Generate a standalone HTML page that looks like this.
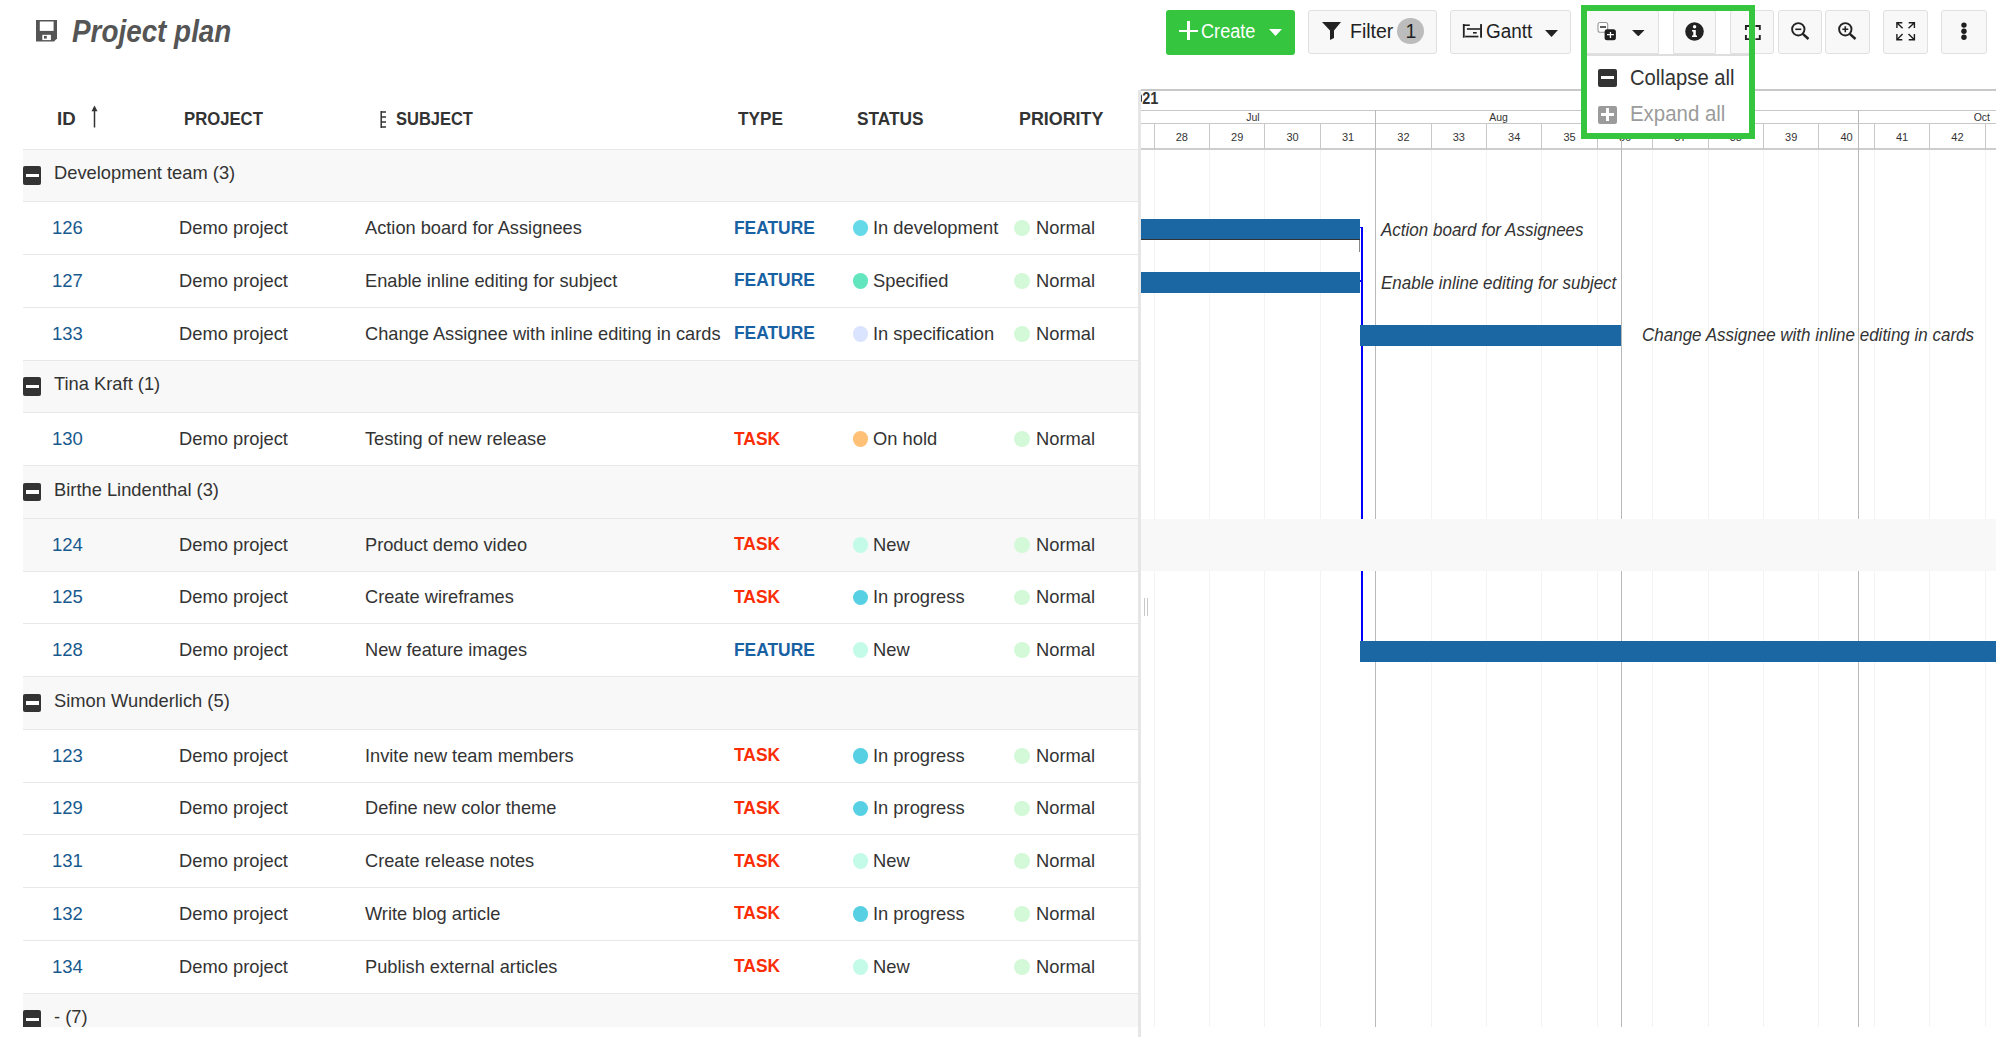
<!DOCTYPE html>
<html><head><meta charset="utf-8"><title>Project plan</title>
<style>
html,body{margin:0;padding:0;background:#fff;}
body{width:2000px;height:1057px;overflow:hidden;position:relative;font-family:"Liberation Sans", sans-serif;}
.t{position:absolute;white-space:nowrap;}
.b{position:absolute;}
</style></head><body>
<svg class="b" style="left:36px;top:20px" width="21" height="21.5" viewBox="0 0 21 21.5"><path d="M0 0H21V18.5L18 21.5H0Z" fill="#555"/><rect x="3.8" y="1.5" width="13.8" height="9.4" fill="#fff"/><rect x="6.3" y="14.8" width="8.6" height="5.3" fill="#fff"/><rect x="8" y="15.9" width="2.8" height="2.7" fill="#555"/></svg>
<div class="t" style="left:72px;top:12.12px;font-size:32.2px;line-height:38.64px;color:#555;font-weight:700;font-style:italic;transform:scaleX(0.865);transform-origin:0 0;">Project plan</div>
<div class="b" style="left:1166px;top:10px;width:129px;height:44.5px;background:#35c53f;border-radius:3px;"></div>
<div class="b" style="left:1179px;top:29.5px;width:19px;height:2.4px;background:#fff"></div>
<div class="b" style="left:1187.3px;top:21px;width:2.4px;height:19px;background:#fff"></div>
<div class="t" style="left:1201px;top:20.24px;font-size:19.5px;line-height:23.4px;color:#fff;font-weight:400;font-style:normal;transform:scaleX(0.93);transform-origin:0 0;">Create</div>
<svg class="b" style="left:1269px;top:29px" width="13" height="7" viewBox="0 0 13 7"><path d="M0 0H13L6.5 7Z" fill="#fff"/></svg>
<div class="b" style="left:1308px;top:9.9px;width:129px;height:44.6px;background:#f8f8f8;border:1.3px solid #e0e0e0;border-bottom-width:1.6px;border-radius:3px;box-sizing:border-box;"></div>
<svg class="b" style="left:1321.5px;top:21.5px" width="19" height="18" viewBox="0 0 19 18"><path d="M0 0H19L12 8.5V16L8 18V8.5Z" fill="#222"/></svg>
<div class="t" style="left:1350px;top:19.84px;font-size:19.5px;line-height:23.4px;color:#222;font-weight:400;font-style:normal;">Filter</div>
<div class="b" style="left:1397px;top:17.5px;width:26.5px;height:26.5px;border-radius:50%;background:#bcbcbc"></div>
<div class="t" style="left:1405.5px;top:19.84px;font-size:19.5px;line-height:23.4px;color:#222;font-weight:400;font-style:normal;">1</div>
<div class="b" style="left:1450px;top:9.9px;width:121px;height:44.6px;background:#f8f8f8;border:1.3px solid #e0e0e0;border-bottom-width:1.6px;border-radius:3px;box-sizing:border-box;"></div>
<svg class="b" style="left:1458px;top:18px" width="32" height="26" viewBox="0 0 32 26" fill="#222"><rect x="4.9" y="6.1" width="1.8" height="13.6"/><rect x="4.9" y="6.4" width="6.9" height="1.6"/><rect x="8.9" y="10.2" width="13.2" height="1.6"/><rect x="15" y="14" width="3.7" height="1.6"/><rect x="7.1" y="17.7" width="13.3" height="1.7"/><rect x="22.1" y="6.1" width="1.9" height="13.6"/></svg>
<div class="t" style="left:1486px;top:19.84px;font-size:19.5px;line-height:23.4px;color:#222;font-weight:400;font-style:normal;transform:scaleX(0.97);transform-origin:0 0;">Gantt</div>
<svg class="b" style="left:1545px;top:29.5px" width="13" height="7" viewBox="0 0 13 7"><path d="M0 0H13L6.5 7Z" fill="#222"/></svg>
<div class="b" style="left:1587px;top:54.3px;width:162px;height:1.5px;background:#dedede;"></div>
<div class="b" style="left:1583px;top:9.9px;width:75.5px;height:44.6px;background:#f8f8f8;border:1.3px solid #e0e0e0;border-bottom-width:1.6px;border-radius:3px 3px 1px 1px;box-sizing:border-box;"></div>
<svg class="b" style="left:1592px;top:16px" width="30" height="30" viewBox="0 0 30 30"><rect x="6" y="6.5" width="9.7" height="9.7" rx="2" fill="#fff" stroke="#999" stroke-width="1.1"/><path d="M8 11H14" stroke="#333" stroke-width="1.6"/><rect x="12.6" y="13.2" width="11.3" height="11.1" rx="2.5" fill="#1e1e1e"/><path d="M15 18.6H21.9M18.45 15.9V21.9" stroke="#fff" stroke-width="1.3"/></svg>
<svg class="b" style="left:1632.2px;top:29.6px" width="12.6" height="6.4" viewBox="0 0 12.6 6.4"><path d="M0 0H12.6L6.3 6.4Z" fill="#222"/></svg>
<div class="b" style="left:1672.5px;top:9.9px;width:43.8px;height:44.6px;background:#f8f8f8;border:1.3px solid #e0e0e0;border-bottom-width:1.6px;border-radius:3px 3px 1px 1px;box-sizing:border-box;"></div>
<svg class="b" style="left:1685px;top:21.5px" width="19" height="19" viewBox="0 0 19 19"><circle cx="9.5" cy="9.5" r="9.3" fill="#222"/><circle cx="9.6" cy="4.8" r="1.7" fill="#fff"/><path d="M7 8H10.8V13.6H12V15H7V13.6H8.3V9.4H7Z" fill="#fff"/></svg>
<div class="b" style="left:1730.2px;top:9.9px;width:44.3px;height:44.6px;background:#f8f8f8;border:1.3px solid #e0e0e0;border-bottom-width:1.6px;border-radius:3px 3px 3px 1px;box-sizing:border-box;"></div>
<svg class="b" style="left:1743.5px;top:23.5px" width="18" height="17" viewBox="0 0 18 17" fill="none" stroke="#222" stroke-width="1.9"><path d="M1.9 6V2H6.4M11.4 2H15.8V6M15.8 11V15.1H11.4M6.4 15.1H1.9V11"/></svg>
<div class="b" style="left:1777.5px;top:9.9px;width:44.5px;height:44.6px;background:#f8f8f8;border:1.3px solid #e0e0e0;border-bottom-width:1.6px;border-radius:3px;box-sizing:border-box;"></div>
<svg class="b" style="left:1790.5px;top:22px" width="19" height="18" viewBox="0 0 19 18" fill="none" stroke="#222"><circle cx="7.3" cy="7.3" r="6.2" stroke-width="1.9"/><path d="M4.3 7.3H10.3" stroke-width="1.6"/><path d="M11.8 11.8L17.5 17" stroke-width="2.5"/></svg>
<div class="b" style="left:1825px;top:9.9px;width:44.5px;height:44.6px;background:#f8f8f8;border:1.3px solid #e0e0e0;border-bottom-width:1.6px;border-radius:3px;box-sizing:border-box;"></div>
<svg class="b" style="left:1838.2px;top:22px" width="19" height="18" viewBox="0 0 19 18" fill="none" stroke="#222"><circle cx="7.3" cy="7.3" r="6.2" stroke-width="1.9"/><path d="M4.3 7.3H10.3M7.3 4.3V10.3" stroke-width="1.6"/><path d="M11.8 11.8L17.5 17" stroke-width="2.5"/></svg>
<div class="b" style="left:1883px;top:9.9px;width:44.5px;height:44.6px;background:#f8f8f8;border:1.3px solid #e0e0e0;border-bottom-width:1.6px;border-radius:3px;box-sizing:border-box;"></div>
<svg class="b" style="left:1890px;top:16px" width="32" height="30" viewBox="0 0 32 30" fill="none" stroke="#1e1e1e" stroke-width="1.4"><path d="M6.9 12V6.7H12.3M6.9 6.7L12.6 12.2"/><path d="M24.4 12V6.7H18.7M24.4 6.7L18.5 12.2"/><path d="M6.9 18.1V23.7H12.3M6.9 23.7L12.6 18.1"/><path d="M24.4 18.1V23.7H18.7M24.4 23.7L18.5 18.1"/></svg>
<div class="b" style="left:1941px;top:9.9px;width:46px;height:44.6px;background:#f8f8f8;border:1.3px solid #e0e0e0;border-bottom-width:1.6px;border-radius:3px;box-sizing:border-box;"></div>
<svg class="b" style="left:1961px;top:22px" width="6" height="18" viewBox="0 0 6 18" fill="#1e1e1e"><circle cx="2.95" cy="3.1" r="2.7"/><circle cx="2.95" cy="9.25" r="2.7"/><circle cx="2.95" cy="15.25" r="2.7"/></svg>
<div class="t" style="left:57.2px;top:107.71px;font-size:19px;line-height:22.8px;color:#333;font-weight:700;font-style:normal;transform:scaleX(0.98);transform-origin:0 0;">ID</div>
<svg class="b" style="left:90px;top:105px" width="9" height="23" viewBox="0 0 9 23"><path d="M4.5 3V22.5" stroke="#333" stroke-width="1.5"/><path d="M1.5 6.3L4.5 0.6L7.5 6.3Z" fill="#333"/></svg>
<div class="t" style="left:184px;top:107.71px;font-size:19px;line-height:22.8px;color:#333;font-weight:700;font-style:normal;transform:scaleX(0.879);transform-origin:0 0;">PROJECT</div>
<svg class="b" style="left:379.5px;top:111px" width="7" height="17" viewBox="0 0 7 17" fill="none" stroke="#333" stroke-width="1.5"><path d="M1.2 0V17M1.2 1H6M1.2 6H6M1.2 11H6M1.2 16H6"/></svg>
<div class="t" style="left:395.5px;top:107.71px;font-size:19px;line-height:22.8px;color:#333;font-weight:700;font-style:normal;transform:scaleX(0.867);transform-origin:0 0;">SUBJECT</div>
<div class="t" style="left:738.2px;top:107.71px;font-size:19px;line-height:22.8px;color:#333;font-weight:700;font-style:normal;transform:scaleX(0.905);transform-origin:0 0;">TYPE</div>
<div class="t" style="left:856.5px;top:107.71px;font-size:19px;line-height:22.8px;color:#333;font-weight:700;font-style:normal;transform:scaleX(0.91);transform-origin:0 0;">STATUS</div>
<div class="t" style="left:1018.5px;top:107.71px;font-size:19px;line-height:22.8px;color:#333;font-weight:700;font-style:normal;transform:scaleX(0.94);transform-origin:0 0;">PRIORITY</div>
<div class="b" style="left:0;top:0;width:1138px;height:1027px;overflow:hidden">
<div class="b" style="left:23px;top:150px;width:1115px;height:51px;background:#f8f8f8;"></div>
<div class="b" style="left:23px;top:149px;width:1115px;height:1px;background:#e8e8e8;"></div>
<div class="b" style="left:23px;top:166.10px;width:18.3px;height:18.5px;background:#333;border-radius:2px"></div>
<div class="b" style="left:26px;top:173.9px;width:12.8px;height:3.2px;background:#fff;"></div>
<div class="t" style="left:54px;top:162.39px;font-size:18.5px;line-height:22.2px;color:#333;font-weight:400;font-style:normal;transform:scaleX(0.99);transform-origin:0 0;">Development team (3)</div>
<div class="b" style="left:23px;top:201px;width:1115px;height:1px;background:#e8e8e8;"></div>
<div class="t" style="left:52px;top:217.09px;font-size:18.5px;line-height:22.2px;color:#175a8e;font-weight:400;font-style:normal;">126</div>
<div class="t" style="left:179.3px;top:217.09px;font-size:18.5px;line-height:22.2px;color:#333;font-weight:400;font-style:normal;transform:scaleX(0.99);transform-origin:0 0;">Demo project</div>
<div class="t" style="left:364.7px;top:217.09px;font-size:18.5px;line-height:22.2px;color:#333;font-weight:400;font-style:normal;transform:scaleX(0.985);transform-origin:0 0;">Action board for Assignees</div>
<div class="t" style="left:733.8px;top:216.61px;font-size:19px;line-height:22.8px;color:#1862a3;font-weight:700;font-style:normal;transform:scaleX(0.915);transform-origin:0 0;">FEATURE</div>
<div class="b" style="left:852.7px;top:220.30px;width:15.8px;height:15.8px;border-radius:50%;background:#66d9e8"></div>
<div class="t" style="left:873px;top:217.09px;font-size:18.5px;line-height:22.2px;color:#333;font-weight:400;font-style:normal;transform:scaleX(0.99);transform-origin:0 0;">In development</div>
<div class="b" style="left:1014.3px;top:220.30px;width:15.8px;height:15.8px;border-radius:50%;background:#d3f9d8"></div>
<div class="t" style="left:1035.5px;top:217.09px;font-size:18.5px;line-height:22.2px;color:#333;font-weight:400;font-style:normal;transform:scaleX(0.99);transform-origin:0 0;">Normal</div>
<div class="b" style="left:23px;top:254px;width:1115px;height:1px;background:#e8e8e8;"></div>
<div class="t" style="left:52px;top:269.84px;font-size:18.5px;line-height:22.2px;color:#175a8e;font-weight:400;font-style:normal;">127</div>
<div class="t" style="left:179.3px;top:269.84px;font-size:18.5px;line-height:22.2px;color:#333;font-weight:400;font-style:normal;transform:scaleX(0.99);transform-origin:0 0;">Demo project</div>
<div class="t" style="left:364.7px;top:269.84px;font-size:18.5px;line-height:22.2px;color:#333;font-weight:400;font-style:normal;transform:scaleX(0.985);transform-origin:0 0;">Enable inline editing for subject</div>
<div class="t" style="left:733.8px;top:269.36px;font-size:19px;line-height:22.8px;color:#1862a3;font-weight:700;font-style:normal;transform:scaleX(0.915);transform-origin:0 0;">FEATURE</div>
<div class="b" style="left:852.7px;top:273.05px;width:15.8px;height:15.8px;border-radius:50%;background:#63e6be"></div>
<div class="t" style="left:873px;top:269.84px;font-size:18.5px;line-height:22.2px;color:#333;font-weight:400;font-style:normal;transform:scaleX(0.99);transform-origin:0 0;">Specified</div>
<div class="b" style="left:1014.3px;top:273.05px;width:15.8px;height:15.8px;border-radius:50%;background:#d3f9d8"></div>
<div class="t" style="left:1035.5px;top:269.84px;font-size:18.5px;line-height:22.2px;color:#333;font-weight:400;font-style:normal;transform:scaleX(0.99);transform-origin:0 0;">Normal</div>
<div class="b" style="left:23px;top:307px;width:1115px;height:1px;background:#e8e8e8;"></div>
<div class="t" style="left:52px;top:322.59px;font-size:18.5px;line-height:22.2px;color:#175a8e;font-weight:400;font-style:normal;">133</div>
<div class="t" style="left:179.3px;top:322.59px;font-size:18.5px;line-height:22.2px;color:#333;font-weight:400;font-style:normal;transform:scaleX(0.99);transform-origin:0 0;">Demo project</div>
<div class="t" style="left:364.7px;top:322.59px;font-size:18.5px;line-height:22.2px;color:#333;font-weight:400;font-style:normal;transform:scaleX(0.985);transform-origin:0 0;">Change Assignee with inline editing in cards</div>
<div class="t" style="left:733.8px;top:322.11px;font-size:19px;line-height:22.8px;color:#1862a3;font-weight:700;font-style:normal;transform:scaleX(0.915);transform-origin:0 0;">FEATURE</div>
<div class="b" style="left:852.7px;top:325.80px;width:15.8px;height:15.8px;border-radius:50%;background:#dbe4ff"></div>
<div class="t" style="left:873px;top:322.59px;font-size:18.5px;line-height:22.2px;color:#333;font-weight:400;font-style:normal;transform:scaleX(0.99);transform-origin:0 0;">In specification</div>
<div class="b" style="left:1014.3px;top:325.80px;width:15.8px;height:15.8px;border-radius:50%;background:#d3f9d8"></div>
<div class="t" style="left:1035.5px;top:322.59px;font-size:18.5px;line-height:22.2px;color:#333;font-weight:400;font-style:normal;transform:scaleX(0.99);transform-origin:0 0;">Normal</div>
<div class="b" style="left:23px;top:361px;width:1115px;height:51px;background:#f8f8f8;"></div>
<div class="b" style="left:23px;top:360px;width:1115px;height:1px;background:#e8e8e8;"></div>
<div class="b" style="left:23px;top:377.10px;width:18.3px;height:18.5px;background:#333;border-radius:2px"></div>
<div class="b" style="left:26px;top:384.9px;width:12.8px;height:3.2px;background:#fff;"></div>
<div class="t" style="left:54px;top:373.39px;font-size:18.5px;line-height:22.2px;color:#333;font-weight:400;font-style:normal;transform:scaleX(0.99);transform-origin:0 0;">Tina Kraft (1)</div>
<div class="b" style="left:23px;top:412px;width:1115px;height:1px;background:#e8e8e8;"></div>
<div class="t" style="left:52px;top:428.09px;font-size:18.5px;line-height:22.2px;color:#175a8e;font-weight:400;font-style:normal;">130</div>
<div class="t" style="left:179.3px;top:428.09px;font-size:18.5px;line-height:22.2px;color:#333;font-weight:400;font-style:normal;transform:scaleX(0.99);transform-origin:0 0;">Demo project</div>
<div class="t" style="left:364.7px;top:428.09px;font-size:18.5px;line-height:22.2px;color:#333;font-weight:400;font-style:normal;transform:scaleX(0.985);transform-origin:0 0;">Testing of new release</div>
<div class="t" style="left:733.8px;top:427.61px;font-size:19px;line-height:22.8px;color:#fa2d05;font-weight:700;font-style:normal;transform:scaleX(0.915);transform-origin:0 0;">TASK</div>
<div class="b" style="left:852.7px;top:431.30px;width:15.8px;height:15.8px;border-radius:50%;background:#ffc078"></div>
<div class="t" style="left:873px;top:428.09px;font-size:18.5px;line-height:22.2px;color:#333;font-weight:400;font-style:normal;transform:scaleX(0.99);transform-origin:0 0;">On hold</div>
<div class="b" style="left:1014.3px;top:431.30px;width:15.8px;height:15.8px;border-radius:50%;background:#d3f9d8"></div>
<div class="t" style="left:1035.5px;top:428.09px;font-size:18.5px;line-height:22.2px;color:#333;font-weight:400;font-style:normal;transform:scaleX(0.99);transform-origin:0 0;">Normal</div>
<div class="b" style="left:23px;top:466px;width:1115px;height:52px;background:#f8f8f8;"></div>
<div class="b" style="left:23px;top:465px;width:1115px;height:1px;background:#e8e8e8;"></div>
<div class="b" style="left:23px;top:482.60px;width:18.3px;height:18.5px;background:#333;border-radius:2px"></div>
<div class="b" style="left:26px;top:490.4px;width:12.8px;height:3.2px;background:#fff;"></div>
<div class="t" style="left:54px;top:478.89px;font-size:18.5px;line-height:22.2px;color:#333;font-weight:400;font-style:normal;transform:scaleX(0.99);transform-origin:0 0;">Birthe Lindenthal (3)</div>
<div class="b" style="left:23px;top:519px;width:1115px;height:52px;background:#f8f8f8;"></div>
<div class="b" style="left:23px;top:518px;width:1115px;height:1px;background:#e8e8e8;"></div>
<div class="t" style="left:52px;top:533.59px;font-size:18.5px;line-height:22.2px;color:#175a8e;font-weight:400;font-style:normal;">124</div>
<div class="t" style="left:179.3px;top:533.59px;font-size:18.5px;line-height:22.2px;color:#333;font-weight:400;font-style:normal;transform:scaleX(0.99);transform-origin:0 0;">Demo project</div>
<div class="t" style="left:364.7px;top:533.59px;font-size:18.5px;line-height:22.2px;color:#333;font-weight:400;font-style:normal;transform:scaleX(0.985);transform-origin:0 0;">Product demo video</div>
<div class="t" style="left:733.8px;top:533.11px;font-size:19px;line-height:22.8px;color:#fa2d05;font-weight:700;font-style:normal;transform:scaleX(0.915);transform-origin:0 0;">TASK</div>
<div class="b" style="left:852.7px;top:536.80px;width:15.8px;height:15.8px;border-radius:50%;background:#c3fae8"></div>
<div class="t" style="left:873px;top:533.59px;font-size:18.5px;line-height:22.2px;color:#333;font-weight:400;font-style:normal;transform:scaleX(0.99);transform-origin:0 0;">New</div>
<div class="b" style="left:1014.3px;top:536.80px;width:15.8px;height:15.8px;border-radius:50%;background:#d3f9d8"></div>
<div class="t" style="left:1035.5px;top:533.59px;font-size:18.5px;line-height:22.2px;color:#333;font-weight:400;font-style:normal;transform:scaleX(0.99);transform-origin:0 0;">Normal</div>
<div class="b" style="left:23px;top:571px;width:1115px;height:1px;background:#e8e8e8;"></div>
<div class="t" style="left:52px;top:586.34px;font-size:18.5px;line-height:22.2px;color:#175a8e;font-weight:400;font-style:normal;">125</div>
<div class="t" style="left:179.3px;top:586.34px;font-size:18.5px;line-height:22.2px;color:#333;font-weight:400;font-style:normal;transform:scaleX(0.99);transform-origin:0 0;">Demo project</div>
<div class="t" style="left:364.7px;top:586.34px;font-size:18.5px;line-height:22.2px;color:#333;font-weight:400;font-style:normal;transform:scaleX(0.985);transform-origin:0 0;">Create wireframes</div>
<div class="t" style="left:733.8px;top:585.86px;font-size:19px;line-height:22.8px;color:#fa2d05;font-weight:700;font-style:normal;transform:scaleX(0.915);transform-origin:0 0;">TASK</div>
<div class="b" style="left:852.7px;top:589.55px;width:15.8px;height:15.8px;border-radius:50%;background:#58d0e4"></div>
<div class="t" style="left:873px;top:586.34px;font-size:18.5px;line-height:22.2px;color:#333;font-weight:400;font-style:normal;transform:scaleX(0.99);transform-origin:0 0;">In progress</div>
<div class="b" style="left:1014.3px;top:589.55px;width:15.8px;height:15.8px;border-radius:50%;background:#d3f9d8"></div>
<div class="t" style="left:1035.5px;top:586.34px;font-size:18.5px;line-height:22.2px;color:#333;font-weight:400;font-style:normal;transform:scaleX(0.99);transform-origin:0 0;">Normal</div>
<div class="b" style="left:23px;top:623px;width:1115px;height:1px;background:#e8e8e8;"></div>
<div class="t" style="left:52px;top:639.09px;font-size:18.5px;line-height:22.2px;color:#175a8e;font-weight:400;font-style:normal;">128</div>
<div class="t" style="left:179.3px;top:639.09px;font-size:18.5px;line-height:22.2px;color:#333;font-weight:400;font-style:normal;transform:scaleX(0.99);transform-origin:0 0;">Demo project</div>
<div class="t" style="left:364.7px;top:639.09px;font-size:18.5px;line-height:22.2px;color:#333;font-weight:400;font-style:normal;transform:scaleX(0.985);transform-origin:0 0;">New feature images</div>
<div class="t" style="left:733.8px;top:638.61px;font-size:19px;line-height:22.8px;color:#1862a3;font-weight:700;font-style:normal;transform:scaleX(0.915);transform-origin:0 0;">FEATURE</div>
<div class="b" style="left:852.7px;top:642.30px;width:15.8px;height:15.8px;border-radius:50%;background:#c3fae8"></div>
<div class="t" style="left:873px;top:639.09px;font-size:18.5px;line-height:22.2px;color:#333;font-weight:400;font-style:normal;transform:scaleX(0.99);transform-origin:0 0;">New</div>
<div class="b" style="left:1014.3px;top:642.30px;width:15.8px;height:15.8px;border-radius:50%;background:#d3f9d8"></div>
<div class="t" style="left:1035.5px;top:639.09px;font-size:18.5px;line-height:22.2px;color:#333;font-weight:400;font-style:normal;transform:scaleX(0.99);transform-origin:0 0;">Normal</div>
<div class="b" style="left:23px;top:677px;width:1115px;height:52px;background:#f8f8f8;"></div>
<div class="b" style="left:23px;top:676px;width:1115px;height:1px;background:#e8e8e8;"></div>
<div class="b" style="left:23px;top:693.60px;width:18.3px;height:18.5px;background:#333;border-radius:2px"></div>
<div class="b" style="left:26px;top:701.4px;width:12.8px;height:3.2px;background:#fff;"></div>
<div class="t" style="left:54px;top:689.89px;font-size:18.5px;line-height:22.2px;color:#333;font-weight:400;font-style:normal;transform:scaleX(0.99);transform-origin:0 0;">Simon Wunderlich (5)</div>
<div class="b" style="left:23px;top:729px;width:1115px;height:1px;background:#e8e8e8;"></div>
<div class="t" style="left:52px;top:744.59px;font-size:18.5px;line-height:22.2px;color:#175a8e;font-weight:400;font-style:normal;">123</div>
<div class="t" style="left:179.3px;top:744.59px;font-size:18.5px;line-height:22.2px;color:#333;font-weight:400;font-style:normal;transform:scaleX(0.99);transform-origin:0 0;">Demo project</div>
<div class="t" style="left:364.7px;top:744.59px;font-size:18.5px;line-height:22.2px;color:#333;font-weight:400;font-style:normal;transform:scaleX(0.985);transform-origin:0 0;">Invite new team members</div>
<div class="t" style="left:733.8px;top:744.11px;font-size:19px;line-height:22.8px;color:#fa2d05;font-weight:700;font-style:normal;transform:scaleX(0.915);transform-origin:0 0;">TASK</div>
<div class="b" style="left:852.7px;top:747.80px;width:15.8px;height:15.8px;border-radius:50%;background:#58d0e4"></div>
<div class="t" style="left:873px;top:744.59px;font-size:18.5px;line-height:22.2px;color:#333;font-weight:400;font-style:normal;transform:scaleX(0.99);transform-origin:0 0;">In progress</div>
<div class="b" style="left:1014.3px;top:747.80px;width:15.8px;height:15.8px;border-radius:50%;background:#d3f9d8"></div>
<div class="t" style="left:1035.5px;top:744.59px;font-size:18.5px;line-height:22.2px;color:#333;font-weight:400;font-style:normal;transform:scaleX(0.99);transform-origin:0 0;">Normal</div>
<div class="b" style="left:23px;top:782px;width:1115px;height:1px;background:#e8e8e8;"></div>
<div class="t" style="left:52px;top:797.34px;font-size:18.5px;line-height:22.2px;color:#175a8e;font-weight:400;font-style:normal;">129</div>
<div class="t" style="left:179.3px;top:797.34px;font-size:18.5px;line-height:22.2px;color:#333;font-weight:400;font-style:normal;transform:scaleX(0.99);transform-origin:0 0;">Demo project</div>
<div class="t" style="left:364.7px;top:797.34px;font-size:18.5px;line-height:22.2px;color:#333;font-weight:400;font-style:normal;transform:scaleX(0.985);transform-origin:0 0;">Define new color theme</div>
<div class="t" style="left:733.8px;top:796.86px;font-size:19px;line-height:22.8px;color:#fa2d05;font-weight:700;font-style:normal;transform:scaleX(0.915);transform-origin:0 0;">TASK</div>
<div class="b" style="left:852.7px;top:800.55px;width:15.8px;height:15.8px;border-radius:50%;background:#58d0e4"></div>
<div class="t" style="left:873px;top:797.34px;font-size:18.5px;line-height:22.2px;color:#333;font-weight:400;font-style:normal;transform:scaleX(0.99);transform-origin:0 0;">In progress</div>
<div class="b" style="left:1014.3px;top:800.55px;width:15.8px;height:15.8px;border-radius:50%;background:#d3f9d8"></div>
<div class="t" style="left:1035.5px;top:797.34px;font-size:18.5px;line-height:22.2px;color:#333;font-weight:400;font-style:normal;transform:scaleX(0.99);transform-origin:0 0;">Normal</div>
<div class="b" style="left:23px;top:834px;width:1115px;height:1px;background:#e8e8e8;"></div>
<div class="t" style="left:52px;top:850.09px;font-size:18.5px;line-height:22.2px;color:#175a8e;font-weight:400;font-style:normal;">131</div>
<div class="t" style="left:179.3px;top:850.09px;font-size:18.5px;line-height:22.2px;color:#333;font-weight:400;font-style:normal;transform:scaleX(0.99);transform-origin:0 0;">Demo project</div>
<div class="t" style="left:364.7px;top:850.09px;font-size:18.5px;line-height:22.2px;color:#333;font-weight:400;font-style:normal;transform:scaleX(0.985);transform-origin:0 0;">Create release notes</div>
<div class="t" style="left:733.8px;top:849.61px;font-size:19px;line-height:22.8px;color:#fa2d05;font-weight:700;font-style:normal;transform:scaleX(0.915);transform-origin:0 0;">TASK</div>
<div class="b" style="left:852.7px;top:853.30px;width:15.8px;height:15.8px;border-radius:50%;background:#c3fae8"></div>
<div class="t" style="left:873px;top:850.09px;font-size:18.5px;line-height:22.2px;color:#333;font-weight:400;font-style:normal;transform:scaleX(0.99);transform-origin:0 0;">New</div>
<div class="b" style="left:1014.3px;top:853.30px;width:15.8px;height:15.8px;border-radius:50%;background:#d3f9d8"></div>
<div class="t" style="left:1035.5px;top:850.09px;font-size:18.5px;line-height:22.2px;color:#333;font-weight:400;font-style:normal;transform:scaleX(0.99);transform-origin:0 0;">Normal</div>
<div class="b" style="left:23px;top:887px;width:1115px;height:1px;background:#e8e8e8;"></div>
<div class="t" style="left:52px;top:902.84px;font-size:18.5px;line-height:22.2px;color:#175a8e;font-weight:400;font-style:normal;">132</div>
<div class="t" style="left:179.3px;top:902.84px;font-size:18.5px;line-height:22.2px;color:#333;font-weight:400;font-style:normal;transform:scaleX(0.99);transform-origin:0 0;">Demo project</div>
<div class="t" style="left:364.7px;top:902.84px;font-size:18.5px;line-height:22.2px;color:#333;font-weight:400;font-style:normal;transform:scaleX(0.985);transform-origin:0 0;">Write blog article</div>
<div class="t" style="left:733.8px;top:902.36px;font-size:19px;line-height:22.8px;color:#fa2d05;font-weight:700;font-style:normal;transform:scaleX(0.915);transform-origin:0 0;">TASK</div>
<div class="b" style="left:852.7px;top:906.05px;width:15.8px;height:15.8px;border-radius:50%;background:#58d0e4"></div>
<div class="t" style="left:873px;top:902.84px;font-size:18.5px;line-height:22.2px;color:#333;font-weight:400;font-style:normal;transform:scaleX(0.99);transform-origin:0 0;">In progress</div>
<div class="b" style="left:1014.3px;top:906.05px;width:15.8px;height:15.8px;border-radius:50%;background:#d3f9d8"></div>
<div class="t" style="left:1035.5px;top:902.84px;font-size:18.5px;line-height:22.2px;color:#333;font-weight:400;font-style:normal;transform:scaleX(0.99);transform-origin:0 0;">Normal</div>
<div class="b" style="left:23px;top:940px;width:1115px;height:1px;background:#e8e8e8;"></div>
<div class="t" style="left:52px;top:955.59px;font-size:18.5px;line-height:22.2px;color:#175a8e;font-weight:400;font-style:normal;">134</div>
<div class="t" style="left:179.3px;top:955.59px;font-size:18.5px;line-height:22.2px;color:#333;font-weight:400;font-style:normal;transform:scaleX(0.99);transform-origin:0 0;">Demo project</div>
<div class="t" style="left:364.7px;top:955.59px;font-size:18.5px;line-height:22.2px;color:#333;font-weight:400;font-style:normal;transform:scaleX(0.985);transform-origin:0 0;">Publish external articles</div>
<div class="t" style="left:733.8px;top:955.11px;font-size:19px;line-height:22.8px;color:#fa2d05;font-weight:700;font-style:normal;transform:scaleX(0.915);transform-origin:0 0;">TASK</div>
<div class="b" style="left:852.7px;top:958.80px;width:15.8px;height:15.8px;border-radius:50%;background:#c3fae8"></div>
<div class="t" style="left:873px;top:955.59px;font-size:18.5px;line-height:22.2px;color:#333;font-weight:400;font-style:normal;transform:scaleX(0.99);transform-origin:0 0;">New</div>
<div class="b" style="left:1014.3px;top:958.80px;width:15.8px;height:15.8px;border-radius:50%;background:#d3f9d8"></div>
<div class="t" style="left:1035.5px;top:955.59px;font-size:18.5px;line-height:22.2px;color:#333;font-weight:400;font-style:normal;transform:scaleX(0.99);transform-origin:0 0;">Normal</div>
<div class="b" style="left:23px;top:994px;width:1115px;height:51px;background:#f8f8f8;"></div>
<div class="b" style="left:23px;top:993px;width:1115px;height:1px;background:#e8e8e8;"></div>
<div class="b" style="left:23px;top:1010.10px;width:18.3px;height:18.5px;background:#333;border-radius:2px"></div>
<div class="b" style="left:26px;top:1017.9px;width:12.8px;height:3.2px;background:#fff;"></div>
<div class="t" style="left:54px;top:1006.39px;font-size:18.5px;line-height:22.2px;color:#333;font-weight:400;font-style:normal;transform:scaleX(0.99);transform-origin:0 0;">- (7)</div>
</div>
<div class="b" style="left:1138px;top:90px;width:3px;height:947px;background:#e6e6e6;"></div>
<div class="b" style="left:1144px;top:598px;width:1.3px;height:18px;background:#c8c8c8;"></div>
<div class="b" style="left:1146.7px;top:598px;width:1.3px;height:18px;background:#c8c8c8;"></div>
<div class="b" style="left:1141px;top:0;width:854.5999999999999px;height:1027px;overflow:hidden">
<div class="b" style="left:0px;top:89.3px;width:854.5999999999999px;height:1.4px;background:#c8c8c8;"></div>
<div class="b" style="left:0px;top:109.9px;width:854.5999999999999px;height:1.2px;background:#c8c8c8;"></div>
<div class="b" style="left:0px;top:123px;width:854.5999999999999px;height:1.2px;background:#c8c8c8;"></div>
<div class="b" style="left:0px;top:148.2px;width:854.5999999999999px;height:1.8px;background:#cdcdcd;"></div>
<div class="b" style="left:0.1px;top:95px;width:1.1px;height:6.6px;background:#333;border-radius:0 3px 3px 0;opacity:0.85;"></div>
<div class="t" style="left:-14.6px;top:90px;font-size:15.6px;line-height:17px;font-weight:700;color:#333;transform:scaleX(0.93);transform-origin:0 0">2021</div>
<div class="b" style="left:12.6px;top:123px;width:1px;height:26px;background:#c8c8c8;"></div>
<div class="b" style="left:12.6px;top:150px;width:1px;height:877px;background:#f3f3f3;"></div>
<div class="b" style="left:68.0px;top:123px;width:1px;height:26px;background:#c8c8c8;"></div>
<div class="b" style="left:68.0px;top:150px;width:1px;height:877px;background:#f3f3f3;"></div>
<div class="b" style="left:123.4px;top:123px;width:1px;height:26px;background:#c8c8c8;"></div>
<div class="b" style="left:123.4px;top:150px;width:1px;height:877px;background:#f3f3f3;"></div>
<div class="b" style="left:178.8px;top:123px;width:1px;height:26px;background:#c8c8c8;"></div>
<div class="b" style="left:178.8px;top:150px;width:1px;height:877px;background:#f3f3f3;"></div>
<div class="b" style="left:234.2px;top:123px;width:1px;height:26px;background:#c8c8c8;"></div>
<div class="b" style="left:234.2px;top:150px;width:1px;height:877px;background:#f3f3f3;"></div>
<div class="b" style="left:289.6px;top:123px;width:1px;height:26px;background:#c8c8c8;"></div>
<div class="b" style="left:289.6px;top:150px;width:1px;height:877px;background:#f3f3f3;"></div>
<div class="b" style="left:345.0px;top:123px;width:1px;height:26px;background:#c8c8c8;"></div>
<div class="b" style="left:345.0px;top:150px;width:1px;height:877px;background:#f3f3f3;"></div>
<div class="b" style="left:400.4px;top:123px;width:1px;height:26px;background:#c8c8c8;"></div>
<div class="b" style="left:400.4px;top:150px;width:1px;height:877px;background:#f3f3f3;"></div>
<div class="b" style="left:455.8px;top:123px;width:1px;height:26px;background:#c8c8c8;"></div>
<div class="b" style="left:455.8px;top:150px;width:1px;height:877px;background:#f3f3f3;"></div>
<div class="b" style="left:511.2px;top:123px;width:1px;height:26px;background:#c8c8c8;"></div>
<div class="b" style="left:511.2px;top:150px;width:1px;height:877px;background:#f3f3f3;"></div>
<div class="b" style="left:566.6px;top:123px;width:1px;height:26px;background:#c8c8c8;"></div>
<div class="b" style="left:566.6px;top:150px;width:1px;height:877px;background:#f3f3f3;"></div>
<div class="b" style="left:622.0px;top:123px;width:1px;height:26px;background:#c8c8c8;"></div>
<div class="b" style="left:622.0px;top:150px;width:1px;height:877px;background:#f3f3f3;"></div>
<div class="b" style="left:677.4px;top:123px;width:1px;height:26px;background:#c8c8c8;"></div>
<div class="b" style="left:677.4px;top:150px;width:1px;height:877px;background:#f3f3f3;"></div>
<div class="b" style="left:732.8px;top:123px;width:1px;height:26px;background:#c8c8c8;"></div>
<div class="b" style="left:732.8px;top:150px;width:1px;height:877px;background:#f3f3f3;"></div>
<div class="b" style="left:788.2px;top:123px;width:1px;height:26px;background:#c8c8c8;"></div>
<div class="b" style="left:788.2px;top:150px;width:1px;height:877px;background:#f3f3f3;"></div>
<div class="b" style="left:843.6px;top:123px;width:1px;height:26px;background:#c8c8c8;"></div>
<div class="b" style="left:843.6px;top:150px;width:1px;height:877px;background:#f3f3f3;"></div>
<div class="t" style="left:20.80px;top:128.5px;width:40px;text-align:center;font-size:11px;line-height:16px;color:#333">28</div>
<div class="t" style="left:76.20px;top:128.5px;width:40px;text-align:center;font-size:11px;line-height:16px;color:#333">29</div>
<div class="t" style="left:131.60px;top:128.5px;width:40px;text-align:center;font-size:11px;line-height:16px;color:#333">30</div>
<div class="t" style="left:187.00px;top:128.5px;width:40px;text-align:center;font-size:11px;line-height:16px;color:#333">31</div>
<div class="t" style="left:242.40px;top:128.5px;width:40px;text-align:center;font-size:11px;line-height:16px;color:#333">32</div>
<div class="t" style="left:297.80px;top:128.5px;width:40px;text-align:center;font-size:11px;line-height:16px;color:#333">33</div>
<div class="t" style="left:353.20px;top:128.5px;width:40px;text-align:center;font-size:11px;line-height:16px;color:#333">34</div>
<div class="t" style="left:408.60px;top:128.5px;width:40px;text-align:center;font-size:11px;line-height:16px;color:#333">35</div>
<div class="t" style="left:464.00px;top:128.5px;width:40px;text-align:center;font-size:11px;line-height:16px;color:#333">36</div>
<div class="t" style="left:519.40px;top:128.5px;width:40px;text-align:center;font-size:11px;line-height:16px;color:#333">37</div>
<div class="t" style="left:574.80px;top:128.5px;width:40px;text-align:center;font-size:11px;line-height:16px;color:#333">38</div>
<div class="t" style="left:630.20px;top:128.5px;width:40px;text-align:center;font-size:11px;line-height:16px;color:#333">39</div>
<div class="t" style="left:685.60px;top:128.5px;width:40px;text-align:center;font-size:11px;line-height:16px;color:#333">40</div>
<div class="t" style="left:741.00px;top:128.5px;width:40px;text-align:center;font-size:11px;line-height:16px;color:#333">41</div>
<div class="t" style="left:796.40px;top:128.5px;width:40px;text-align:center;font-size:11px;line-height:16px;color:#333">42</div>
<div class="t" style="left:851.80px;top:128.5px;width:40px;text-align:center;font-size:11px;line-height:16px;color:#333">43</div>
<div class="b" style="left:233.9px;top:110px;width:1.2px;height:917px;background:#b9b9b9;"></div>
<div class="b" style="left:479.6px;top:110px;width:1.2px;height:917px;background:#b9b9b9;"></div>
<div class="b" style="left:717.0px;top:110px;width:1.2px;height:917px;background:#b9b9b9;"></div>
<div class="t" style="left:92px;top:110.5px;width:40px;text-align:center;font-size:10.5px;line-height:12px;color:#333">Jul</div>
<div class="t" style="left:337.5px;top:110.5px;width:40px;text-align:center;font-size:10.5px;line-height:12px;color:#333">Aug</div>
<div class="t" style="left:809px;top:110.5px;width:40px;text-align:right;font-size:10.5px;line-height:12px;color:#333">Oct</div>
<div class="b" style="left:219.2px;top:226.8px;width:3px;height:1.7px;background:#0000ff;"></div>
<div class="b" style="left:219.2px;top:280.25px;width:3px;height:1.5px;background:#0000ff;"></div>
<div class="b" style="left:220.1px;top:226.8px;width:1.9px;height:414.2px;background:#0000ff;"></div>
<div class="b" style="left:0px;top:519px;width:854.5999999999999px;height:52px;background:#f8f8f8;"></div>
<div class="b" style="left:0px;top:219px;width:219.2px;height:21px;background:#1a67a3;"></div>
<div class="b" style="left:0px;top:272px;width:219.2px;height:21px;background:#1a67a3;"></div>
<div class="b" style="left:219.2px;top:325px;width:261.0px;height:21px;background:#1a67a3;"></div>
<div class="b" style="left:219.2px;top:641px;width:635.4px;height:21px;background:#1a67a3;"></div>
<div class="b" style="left:0px;top:238.9px;width:219.20000000000005px;height:1.1px;background:#333;"></div>
<div class="b" style="left:218.3px;top:239.8px;width:1.1px;height:12px;background:#888;"></div>
<div class="t" style="left:239.5px;top:218.93px;font-size:18.3px;line-height:21.96px;color:#333;font-weight:400;font-style:italic;transform:scaleX(0.93);transform-origin:0 0;">Action board for Assignees</div>
<div class="t" style="left:239.5px;top:271.68px;font-size:18.3px;line-height:21.96px;color:#333;font-weight:400;font-style:italic;transform:scaleX(0.93);transform-origin:0 0;">Enable inline editing for subject</div>
<div class="t" style="left:501px;top:324.43px;font-size:18.3px;line-height:21.96px;color:#333;font-weight:400;font-style:italic;transform:scaleX(0.93);transform-origin:0 0;">Change Assignee with inline editing in cards</div>
</div>
<div class="b" style="left:1587px;top:55.8px;width:162px;height:78px;background:#fff;"></div>
<div class="b" style="left:1598px;top:68.6px;width:18.8px;height:18px;background:#333;border-radius:2px"></div>
<div class="b" style="left:1601px;top:76px;width:12.8px;height:3.2px;background:#fff;"></div>
<div class="t" style="left:1630.3px;top:65.55px;font-size:21.5px;line-height:25.8px;color:#333;font-weight:400;font-style:normal;transform:scaleX(0.94);transform-origin:0 0;">Collapse all</div>
<div class="b" style="left:1598px;top:105.7px;width:18.8px;height:18px;background:#9b9b9b;border-radius:2px"></div>
<div class="b" style="left:1601px;top:113.3px;width:12.8px;height:3px;background:#fff;"></div>
<div class="b" style="left:1605.9px;top:108.4px;width:3px;height:12.8px;background:#fff;"></div>
<div class="t" style="left:1630.3px;top:102.45px;font-size:21.5px;line-height:25.8px;color:#9b9b9b;font-weight:400;font-style:normal;transform:scaleX(0.95);transform-origin:0 0;">Expand all</div>
<div class="b" style="left:1581px;top:5px;width:174px;height:134px;border:6px solid #35c53f;box-sizing:border-box"></div>
</body></html>
